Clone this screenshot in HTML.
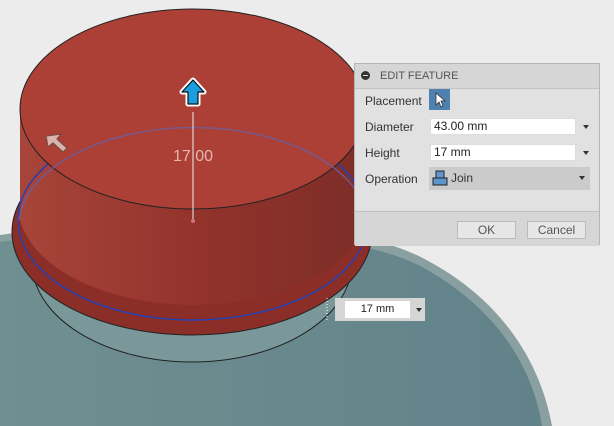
<!DOCTYPE html>
<html><head><style>
body{margin:0;width:614px;height:426px;overflow:hidden;background:#ececec;font-family:"Liberation Sans",sans-serif;position:relative}
.dlg{position:absolute;left:354px;top:63px;width:246px;height:182px;background:#e1e1e1;border:1px solid #b5b5b5;box-sizing:border-box}
.hd{height:24px;background:#d6d6d6;border-bottom:1px solid #c2c2c2;font-size:11px;color:#555;line-height:24px;padding-left:25px;position:relative}
.hd:before{content:"";position:absolute;left:6px;top:7px;width:9px;height:9px;border-radius:50%;background:#333}
.hd:after{content:"";position:absolute;left:8px;top:11px;width:5px;height:1px;background:#ddd}
.lb{position:absolute;left:10px;font-size:12px;color:#333}
.in{position:absolute;left:75px;width:146px;height:17px;background:#fff;border:1px solid #ddd;box-sizing:border-box;font-size:12px;line-height:15px;padding-left:3px;color:#222}
.tri{position:absolute;width:0;height:0;border-left:3px solid transparent;border-right:3px solid transparent;border-top:4px solid #333}
.btn{position:absolute;top:157px;height:18px;background:#e6e6e6;border:1px solid #bbb;box-sizing:border-box;font-size:12px;color:#555;text-align:center;line-height:16px}
</style></head><body>
<svg width="614" height="426" style="position:absolute;left:0;top:0">
<defs>
<linearGradient id="rs" x1="0" x2="1"><stop offset="0" stop-color="#a8453a"/><stop offset=".5" stop-color="#93332c"/><stop offset="1" stop-color="#7d2d27"/></linearGradient>
<linearGradient id="gr" x1="0" x2="1"><stop offset="0" stop-color="#6f8f91"/><stop offset="1" stop-color="#62828a"/></linearGradient>
</defs>
<path d="M0,235 C150,212 350,215 430,262 C500,300 540,360 552,426 L0,426Z" fill="#8aa0a0"/>
<path d="M0,242 C150,222 345,225 424,268 C492,306 532,362 542,426 L0,426Z" fill="url(#gr)"/>
<ellipse cx="192" cy="262" rx="160" ry="100" fill="#7a9799" stroke="#222" stroke-width="1"/>
<ellipse cx="192" cy="232" rx="180" ry="103" fill="#8a2e27" stroke="#222" stroke-width="1"/>
<path d="M20,109 L20,220 A175,100 0 0 0 366,220 L366,109Z" fill="url(#rs)"/>
<ellipse cx="193" cy="220" rx="175" ry="100" fill="none" stroke="#2740b0" stroke-width="1.5"/>
<ellipse cx="193" cy="109" rx="173" ry="100" fill="#ac4036" stroke="#222" stroke-width="1"/>
<path d="M19,220 A175,100 0 0 1 368,220" fill="none" stroke="#6b5fa0" stroke-width="1.5" opacity=".8"/>
<line x1="193" y1="112" x2="193" y2="220" stroke="#eee" stroke-width="1"/>
<circle cx="193" cy="221" r="2" fill="#c77"/>
<text x="193" y="161" font-size="16" fill="#e6b6b0" text-anchor="middle" font-family="Liberation Sans">17.00</text>
<path d="M193,80 L204,92 L198,92 L198,104 L188,104 L188,92 L182,92Z" fill="#1a9ee0" stroke="#fff" stroke-width="5" stroke-linejoin="round" paint-order="stroke"/>
<path d="M193,80 L204,92 L198,92 L198,104 L188,104 L188,92 L182,92Z" fill="#1a9ee0" stroke="#111" stroke-width="1.2" stroke-linejoin="round"/>
<path d="M46,136 L61,134 L57,139 L67,148 L63,152 L53,143 L48,147Z" fill="#d9b5ae" stroke="#7a4b45" stroke-width="1.2" stroke-linejoin="round"/>
<line x1="327" y1="298" x2="327" y2="322" stroke="#fff" stroke-dasharray="1,2"/>
</svg>
<div style="position:absolute;left:335px;top:298px;width:90px;height:23px;background:#d5d5d5"></div>
<div style="position:absolute;left:345px;top:301px;width:65px;height:17px;background:#fff;font-size:11px;text-align:center;line-height:17px;color:#222">17 mm</div>
<div class="tri" style="left:416px;top:308px"></div>
<div class="dlg">
<div class="hd">EDIT FEATURE</div>
<div class="lb" style="top:30px">Placement</div>
<div style="position:absolute;left:74px;top:25px;width:21px;height:21px;background:#4e80b0"><svg width="21" height="21"><path d="M7,4 L7,16 L10,13 L12,18 L14,17 L12,12 L16,12Z" fill="#fff" stroke="#333" stroke-width=".8"/></svg></div>
<div class="lb" style="top:56px">Diameter</div>
<div class="in" style="top:54px">43.00 mm</div><div class="tri" style="left:228px;top:61px"></div>
<div class="lb" style="top:82px">Height</div>
<div class="in" style="top:80px">17 mm</div><div class="tri" style="left:228px;top:87px"></div>
<div class="lb" style="top:108px">Operation</div>
<div style="position:absolute;left:74px;top:103px;width:161px;height:23px;background:#cbcbcb;font-size:12px;line-height:23px;padding-left:22px;box-sizing:border-box;color:#333">Join
<svg width="16" height="16" style="position:absolute;left:3px;top:3px"><rect x="4" y="1" width="8" height="8" fill="#5d95cc" stroke="#222"/><rect x="1" y="8" width="14" height="7" fill="#5d95cc" stroke="#222"/></svg></div>
<div class="tri" style="left:224px;top:112px"></div>
<div style="position:absolute;left:0;top:147px;width:100%;border-top:1px solid #c0c0c0;height:34px;background:#d6d6d6"></div>
<div class="btn" style="left:102px;width:59px">OK</div>
<div class="btn" style="left:172px;width:59px">Cancel</div>
</div>
</body></html>
